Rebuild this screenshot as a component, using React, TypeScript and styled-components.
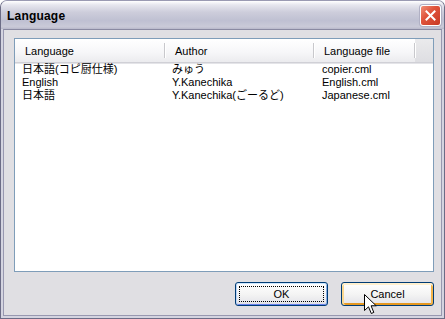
import React, { FC } from "react";
import styled, { createGlobalStyle } from "styled-components";

const GlobalStyle = createGlobalStyle`
  html, body {
    margin: 0;
    padding: 0;
    background: #ffffff;
  }
  body {
    font-family: "Liberation Sans", "Noto Sans CJK JP", sans-serif;
    font-size: 11px;
    color: #000;
  }
`;

const Window = styled.div`
  position: relative;
  width: 445px;
  height: 319px;
  box-sizing: border-box;
  display: flex;
  flex-direction: column;
  border-radius: 7px 7px 0 0;
  border: 1px solid #6c6c86;
  border-top-color: #9a9ab2;
  background: #d4d4e0;
  overflow: hidden;
`;

const TitleBar = styled.div`
  height: 28px;
  flex: none;
  display: flex;
  align-items: center;
  justify-content: space-between;
  padding: 0 3px 0 6px;
  background: linear-gradient(
    #ffffff 0%,
    #e6e6ee 14%,
    #cdcddb 40%,
    #bfc0d2 70%,
    #cacad8 92%,
    #b8b8ca 100%
  );
`;

const Title = styled.span`
  font-size: 12px;
  font-weight: bold;
  color: #000;
  letter-spacing: 0.2px;
  margin-top: 1px;
`;

const CloseButton = styled.div`
  width: 21px;
  height: 21px;
  box-sizing: border-box;
  border: 1px solid #ffffff;
  border-radius: 3px;
  background: linear-gradient(135deg, #f09078 0%, #e0543c 40%, #c83824 100%);
  display: flex;
  align-items: center;
  justify-content: center;
  box-shadow: 0 0 0 1px #b0b0c4;
`;

const Client = styled.div`
  flex: 1;
  margin: 0 2px 2px;
  border: 1px solid #9898b0;
  border-top: 1px solid #8a8aa2;
  background: #e0dfe3;
  display: flex;
  flex-direction: column;
  padding: 8px 7px 9px 10px;
`;

const ListBox = styled.div`
  flex: 1;
  border: 1px solid #7f9db9;
  background: #ffffff;
  display: flex;
  flex-direction: column;
`;

const Header = styled.div`
  display: flex;
  height: 23px;
  flex: none;
  background: linear-gradient(#ffffff 0%, #f6f6f8 60%, #ebebee 100%);
  border-bottom: 1px solid #d0d0d6;
  box-shadow: 0 1px 0 #e4e4e8;
`;

const HeaderCell = styled.div<{ $w: number }>`
  width: ${({ $w }) => $w}px;
  flex: none;
  box-sizing: border-box;
  display: flex;
  align-items: center;
  padding-left: 10px;
  position: relative;
  &::after {
    content: "";
    position: absolute;
    right: 0;
    top: 4px;
    bottom: 4px;
    width: 1px;
    background: #c8c8cc;
    box-shadow: 1px 0 0 #ffffff;
  }
`;

const HeaderFiller = styled.div`
  flex: 1;
  background: linear-gradient(#eaeaec, #dedee2);
`;

const Row = styled.div`
  display: flex;
  height: 13px;
  line-height: 13px;
  white-space: nowrap;
`;

const Cell = styled.div<{ $w: number; $pad: number }>`
  width: ${({ $w }) => $w}px;
  flex: none;
  box-sizing: border-box;
  padding-left: ${({ $pad }) => $pad}px;
  overflow: hidden;
`;

const ButtonRow = styled.div`
  display: flex;
  justify-content: flex-end;
  gap: 13px;
  margin-top: 10px;
  flex: none;
`;

const Button = styled.div<{ $variant: "default" | "hover" }>`
  width: 93px;
  height: 24px;
  box-sizing: border-box;
  border: 1px solid #003c74;
  border-radius: 3px;
  background: linear-gradient(#ffffff 0%, #f4f4f4 50%, #e6e6ea 90%, #d8d8de 100%);
  display: flex;
  align-items: center;
  justify-content: center;
  position: relative;
  font-size: 11px;
  box-shadow: ${({ $variant }) =>
    $variant === "hover"
      ? "inset 0 2px 0 #fff0cf, inset 2px 0 0 #fbd890, inset -2px 0 0 #f3b44a, inset 0 -2px 0 #e5971f"
      : "inset 0 1px 0 #cee7ff, inset 1px 0 0 #bcd4f6, inset -1px 0 0 #89ade4, inset 0 -1px 0 #6982ee"};
`;

const FocusRing = styled.div`
  position: absolute;
  inset: 3px;
  border: 1px dotted #000;
  pointer-events: none;
`;

const Cursor = styled.svg`
  position: absolute;
  left: 363px;
  top: 293px;
`;

const columns = [150, 149, 101];

const rows = [
  ["日本語(コピ厨仕様)", "みゅう", "copier.cml"],
  ["English", "Y.Kanechika", "English.cml"],
  ["日本語", "Y.Kanechika(ごーるど)", "Japanese.cml"],
];

const App: FC = () => {
  return (
    <>
      <GlobalStyle />
      <Window>
        <TitleBar>
          <Title>Language</Title>
          <CloseButton>
            <svg width="11" height="11" viewBox="0 0 11 11">
              <path d="M1.5 1.5 L9.5 9.5 M9.5 1.5 L1.5 9.5" stroke="#ffffff" strokeWidth="2" strokeLinecap="square" />
            </svg>
          </CloseButton>
        </TitleBar>

        <Client>
          <ListBox>
            <Header>
              <HeaderCell $w={columns[0]}>Language</HeaderCell>
              <HeaderCell $w={columns[1]}>Author</HeaderCell>
              <HeaderCell $w={columns[2]}>Language file</HeaderCell>
              <HeaderFiller />
            </Header>
            {rows.map((r, i) => (
              <Row key={i}>
                <Cell $w={columns[0]} $pad={7}>{r[0]}</Cell>
                <Cell $w={columns[1]} $pad={7}>{r[1]}</Cell>
                <Cell $w={columns[2]} $pad={8}>{r[2]}</Cell>
              </Row>
            ))}
          </ListBox>

          <ButtonRow>
            <Button $variant="default">
              OK
              <FocusRing />
            </Button>
            <Button $variant="hover">Cancel</Button>
          </ButtonRow>
        </Client>

        <Cursor width="14" height="22" viewBox="0 0 14 22">
          <path
            d="M0.5 0.5 L0.5 16.5 L4.5 12.8 L7.3 19.5 L9.8 18.4 L7.1 11.8 L12.2 11.8 Z"
            fill="#ffffff"
            stroke="#000000"
            strokeWidth="1"
            strokeLinejoin="miter"
          />
        </Cursor>
      </Window>
    </>
  );
};

export default App;
